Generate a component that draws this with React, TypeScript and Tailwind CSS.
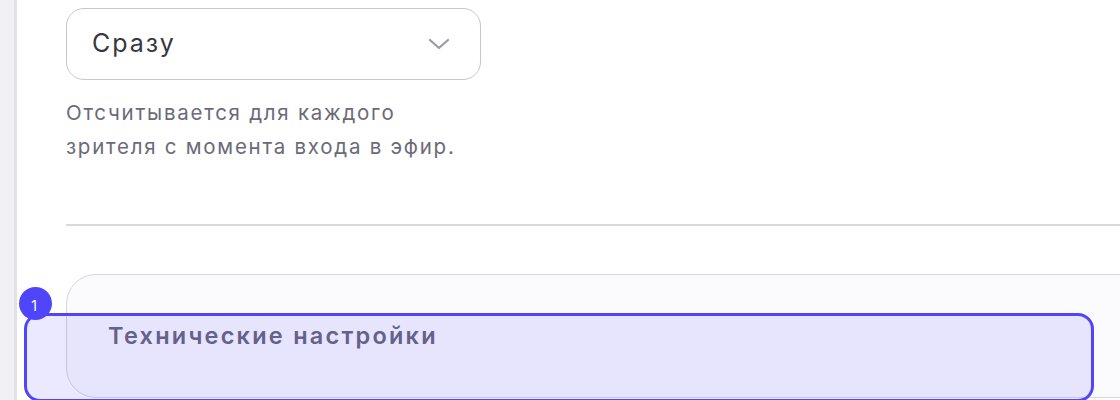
export default function App() {
  return (
    <div className="relative flex h-[400px] w-[1120px] overflow-hidden bg-white" style={{ fontFamily: 'Inter, "Noto Sans", sans-serif' }}>
      {/* left rail */}
      <div className="w-[17px] shrink-0 border-r-[3px] border-[#e2e1e8] bg-[#f1f0f5]" />

      {/* main column */}
      <div className="min-w-0 flex-1 pl-[49px] pt-[8px]">
        <div className="w-[1100px]">
          <button className="flex h-[72px] w-[415px] items-center justify-between rounded-[18px] border-[1.5px] border-[#c6c5d1] bg-white pl-[25px] pr-[30px]">
            <span className="text-[25px] tracking-[0.08em] text-[#38373f]">Сразу</span>
            <svg width="22" height="12" viewBox="0 0 22 12" fill="none" className="text-[#9b9aa6]">
              <path d="M2 2l9 8 9-8" stroke="currentColor" strokeWidth="2.2" strokeLinecap="round" strokeLinejoin="round" />
            </svg>
          </button>

          <p className="mt-[16px] w-[395px] text-[20.5px] leading-[34px] tracking-[0.085em] text-[#6b6a78]">
            Отсчитывается для каждого зрителя с момента входа в эфир.
          </p>

          <div className="mt-[60px] h-[2px] bg-[#d8d8de]" />

          <div className="mt-[48px] h-[124px] rounded-[30px] border-[1.5px] border-[#d6d6de] bg-[#fbfbfd] pl-[41px] pt-[47px]">
            <h3 className="text-[23.5px] font-semibold leading-[28px] tracking-[0.095em] text-[#67657a]">Технические настройки</h3>
          </div>
        </div>
      </div>

      {/* highlight overlay */}
      <div className="pointer-events-none absolute left-[24px] top-[313px] h-[89px] w-[1070px] rounded-[16px] border-[3px] border-[#4f46fb] bg-[#4f46fb]/[0.12]" />
      <div className="absolute left-[19px] top-[287px] flex h-[33px] w-[33px] items-center justify-center rounded-full bg-[#4f46fb] pr-[3px] pt-[4px] text-[14px] text-white">
        1
      </div>
    </div>
  );
}
